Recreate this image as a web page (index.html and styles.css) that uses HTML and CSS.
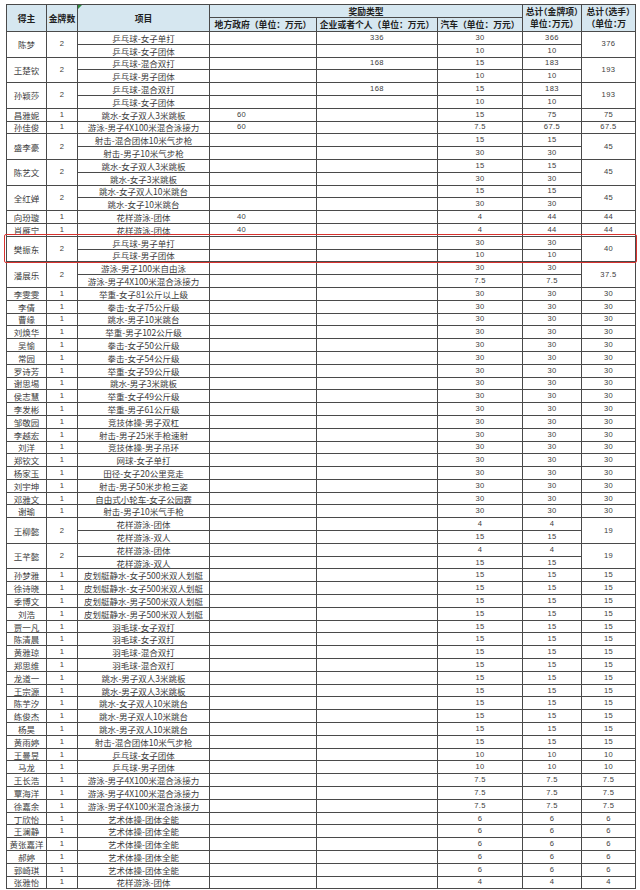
FILE: index.html
```html
<!DOCTYPE html>
<html lang="zh-CN">
<head>
<meta charset="utf-8">
<title>奖励统计</title>
<link rel="stylesheet" href="styles.css">
</head>
<body>
<div class="sheet">
<table class="grid">
<colgroup>
<col class="w-name"><col class="w-cnt"><col class="w-proj"><col class="w-gov"><col class="w-ent"><col class="w-car"><col class="w-tot"><col class="w-sum">
</colgroup>
<thead>
<tr class="h1">
<th rowspan="2">得主</th>
<th rowspan="2">金牌数</th>
<th rowspan="2" class="proj-h">项目</th>
<th colspan="3">奖励类型</th>
<th rowspan="2" class="two"><span class="ln">总计（金牌项）</span><span class="ln">单位：万元）</span></th>
<th rowspan="2" class="two"><span class="ln">总计（选手）</span><span class="ln">（单位：万</span></th>
</tr>
<tr class="h2">
<th>地方政府（单位：万元）</th>
<th>企业或者个人（单位：万元）</th>
<th>汽车（单位：万元）</th>
</tr>
</thead>
<tbody>
<tr><td class="nm" rowspan="2">陈梦</td><td class="ct" rowspan="2">2</td><td class="pj">乒乓球-女子单打</td><td class="gv"></td><td class="num">336</td><td class="num">30</td><td class="num">366</td><td class="num" rowspan="2">376</td></tr>
<tr><td class="pj">乒乓球-女子团体</td><td class="gv"></td><td class="num"></td><td class="num">10</td><td class="num">10</td></tr>
<tr><td class="nm" rowspan="2">王楚钦</td><td class="ct" rowspan="2">2</td><td class="pj">乒乓球-混合双打</td><td class="gv"></td><td class="num">168</td><td class="num">15</td><td class="num">183</td><td class="num" rowspan="2">193</td></tr>
<tr><td class="pj">乒乓球-男子团体</td><td class="gv"></td><td class="num"></td><td class="num">10</td><td class="num">10</td></tr>
<tr><td class="nm" rowspan="2">孙颖莎</td><td class="ct" rowspan="2">2</td><td class="pj">乒乓球-混合双打</td><td class="gv"></td><td class="num">168</td><td class="num">15</td><td class="num">183</td><td class="num" rowspan="2">193</td></tr>
<tr><td class="pj">乒乓球-女子团体</td><td class="gv"></td><td class="num"></td><td class="num">10</td><td class="num">10</td></tr>
<tr><td class="nm">昌雅妮</td><td class="ct">1</td><td class="pj">跳水-女子双人3米跳板</td><td class="gv">60</td><td class="num"></td><td class="num">15</td><td class="num">75</td><td class="num">75</td></tr>
<tr><td class="nm">孙佳俊</td><td class="ct">1</td><td class="pj">游泳-男子4X100米混合泳接力</td><td class="gv">60</td><td class="num"></td><td class="num">7.5</td><td class="num">67.5</td><td class="num">67.5</td></tr>
<tr><td class="nm" rowspan="2">盛李豪</td><td class="ct" rowspan="2">2</td><td class="pj">射击-混合团体10米气步枪</td><td class="gv"></td><td class="num"></td><td class="num">15</td><td class="num">15</td><td class="num" rowspan="2">45</td></tr>
<tr><td class="pj">射击-男子10米气步枪</td><td class="gv"></td><td class="num"></td><td class="num">30</td><td class="num">30</td></tr>
<tr><td class="nm" rowspan="2">陈艺文</td><td class="ct" rowspan="2">2</td><td class="pj">跳水-女子双人3米跳板</td><td class="gv"></td><td class="num"></td><td class="num">15</td><td class="num">15</td><td class="num" rowspan="2">45</td></tr>
<tr><td class="pj">跳水-女子3米跳板</td><td class="gv"></td><td class="num"></td><td class="num">30</td><td class="num">30</td></tr>
<tr><td class="nm" rowspan="2">全红婵</td><td class="ct" rowspan="2">2</td><td class="pj">跳水-女子双人10米跳台</td><td class="gv"></td><td class="num"></td><td class="num">15</td><td class="num">15</td><td class="num" rowspan="2">45</td></tr>
<tr><td class="pj">跳水-女子10米跳台</td><td class="gv"></td><td class="num"></td><td class="num">30</td><td class="num">30</td></tr>
<tr><td class="nm">向玢璇</td><td class="ct">1</td><td class="pj">花样游泳-团体</td><td class="gv">40</td><td class="num"></td><td class="num">4</td><td class="num">44</td><td class="num">44</td></tr>
<tr><td class="nm">肖雁宁</td><td class="ct">1</td><td class="pj">花样游泳-团体</td><td class="gv">40</td><td class="num"></td><td class="num">4</td><td class="num">44</td><td class="num">44</td></tr>
<tr><td class="nm hl" rowspan="2">樊振东<span class="mark"></span></td><td class="ct" rowspan="2">2</td><td class="pj">乒乓球-男子单打</td><td class="gv"></td><td class="num"></td><td class="num">30</td><td class="num">30</td><td class="num" rowspan="2">40</td></tr>
<tr><td class="pj">乒乓球-男子团体</td><td class="gv"></td><td class="num"></td><td class="num">10</td><td class="num">10</td></tr>
<tr><td class="nm" rowspan="2">潘展乐</td><td class="ct" rowspan="2">2</td><td class="pj">游泳-男子100米自由泳</td><td class="gv"></td><td class="num"></td><td class="num">30</td><td class="num">30</td><td class="num" rowspan="2">37.5</td></tr>
<tr><td class="pj">游泳-男子4X100米混合泳接力</td><td class="gv"></td><td class="num"></td><td class="num">7.5</td><td class="num">7.5</td></tr>
<tr><td class="nm">李雯雯</td><td class="ct">1</td><td class="pj">举重-女子81公斤以上级</td><td class="gv"></td><td class="num"></td><td class="num">30</td><td class="num">30</td><td class="num">30</td></tr>
<tr><td class="nm">李倩</td><td class="ct">1</td><td class="pj">拳击-女子75公斤级</td><td class="gv"></td><td class="num"></td><td class="num">30</td><td class="num">30</td><td class="num">30</td></tr>
<tr><td class="nm">曹缘</td><td class="ct">1</td><td class="pj">跳水-男子10米跳台</td><td class="gv"></td><td class="num"></td><td class="num">30</td><td class="num">30</td><td class="num">30</td></tr>
<tr><td class="nm">刘焕华</td><td class="ct">1</td><td class="pj">举重-男子102公斤级</td><td class="gv"></td><td class="num"></td><td class="num">30</td><td class="num">30</td><td class="num">30</td></tr>
<tr><td class="nm">吴愉</td><td class="ct">1</td><td class="pj">拳击-女子50公斤级</td><td class="gv"></td><td class="num"></td><td class="num">30</td><td class="num">30</td><td class="num">30</td></tr>
<tr><td class="nm">常园</td><td class="ct">1</td><td class="pj">拳击-女子54公斤级</td><td class="gv"></td><td class="num"></td><td class="num">30</td><td class="num">30</td><td class="num">30</td></tr>
<tr><td class="nm">罗诗芳</td><td class="ct">1</td><td class="pj">举重-女子59公斤级</td><td class="gv"></td><td class="num"></td><td class="num">30</td><td class="num">30</td><td class="num">30</td></tr>
<tr><td class="nm">谢思埸</td><td class="ct">1</td><td class="pj">跳水-男子3米跳板</td><td class="gv"></td><td class="num"></td><td class="num">30</td><td class="num">30</td><td class="num">30</td></tr>
<tr><td class="nm">侯志慧</td><td class="ct">1</td><td class="pj">举重-女子49公斤级</td><td class="gv"></td><td class="num"></td><td class="num">30</td><td class="num">30</td><td class="num">30</td></tr>
<tr><td class="nm">李发彬</td><td class="ct">1</td><td class="pj">举重-男子61公斤级</td><td class="gv"></td><td class="num"></td><td class="num">30</td><td class="num">30</td><td class="num">30</td></tr>
<tr><td class="nm">邹敬园</td><td class="ct">1</td><td class="pj">竞技体操-男子双杠</td><td class="gv"></td><td class="num"></td><td class="num">30</td><td class="num">30</td><td class="num">30</td></tr>
<tr><td class="nm">李越宏</td><td class="ct">1</td><td class="pj">射击-男子25米手枪速射</td><td class="gv"></td><td class="num"></td><td class="num">30</td><td class="num">30</td><td class="num">30</td></tr>
<tr><td class="nm">刘洋</td><td class="ct">1</td><td class="pj">竞技体操-男子吊环</td><td class="gv"></td><td class="num"></td><td class="num">30</td><td class="num">30</td><td class="num">30</td></tr>
<tr><td class="nm">郑钦文</td><td class="ct">1</td><td class="pj">网球-女子单打</td><td class="gv"></td><td class="num"></td><td class="num">30</td><td class="num">30</td><td class="num">30</td></tr>
<tr><td class="nm">杨家玉</td><td class="ct">1</td><td class="pj">田径-女子20公里竞走</td><td class="gv"></td><td class="num"></td><td class="num">30</td><td class="num">30</td><td class="num">30</td></tr>
<tr><td class="nm">刘宇坤</td><td class="ct">1</td><td class="pj">射击-男子50米步枪三姿</td><td class="gv"></td><td class="num"></td><td class="num">30</td><td class="num">30</td><td class="num">30</td></tr>
<tr><td class="nm">邓雅文</td><td class="ct">1</td><td class="pj">自由式小轮车-女子公园赛</td><td class="gv"></td><td class="num"></td><td class="num">30</td><td class="num">30</td><td class="num">30</td></tr>
<tr><td class="nm">谢瑜</td><td class="ct">1</td><td class="pj">射击-男子10米气手枪</td><td class="gv"></td><td class="num"></td><td class="num">30</td><td class="num">30</td><td class="num">30</td></tr>
<tr><td class="nm" rowspan="2">王柳懿</td><td class="ct" rowspan="2">2</td><td class="pj">花样游泳-团体</td><td class="gv"></td><td class="num"></td><td class="num">4</td><td class="num">4</td><td class="num" rowspan="2">19</td></tr>
<tr><td class="pj">花样游泳-双人</td><td class="gv"></td><td class="num"></td><td class="num">15</td><td class="num">15</td></tr>
<tr><td class="nm" rowspan="2">王芊懿</td><td class="ct" rowspan="2">2</td><td class="pj">花样游泳-团体</td><td class="gv"></td><td class="num"></td><td class="num">4</td><td class="num">4</td><td class="num" rowspan="2">19</td></tr>
<tr><td class="pj">花样游泳-双人</td><td class="gv"></td><td class="num"></td><td class="num">15</td><td class="num">15</td></tr>
<tr><td class="nm">孙梦雅</td><td class="ct">1</td><td class="pj">皮划艇静水-女子500米双人划艇</td><td class="gv"></td><td class="num"></td><td class="num">15</td><td class="num">15</td><td class="num">15</td></tr>
<tr><td class="nm">徐诗晓</td><td class="ct">1</td><td class="pj">皮划艇静水-女子500米双人划艇</td><td class="gv"></td><td class="num"></td><td class="num">15</td><td class="num">15</td><td class="num">15</td></tr>
<tr><td class="nm">季博文</td><td class="ct">1</td><td class="pj">皮划艇静水-男子500米双人划艇</td><td class="gv"></td><td class="num"></td><td class="num">15</td><td class="num">15</td><td class="num">15</td></tr>
<tr><td class="nm">刘浩</td><td class="ct">1</td><td class="pj">皮划艇静水-男子500米双人划艇</td><td class="gv"></td><td class="num"></td><td class="num">15</td><td class="num">15</td><td class="num">15</td></tr>
<tr><td class="nm">贾一凡</td><td class="ct">1</td><td class="pj">羽毛球-女子双打</td><td class="gv"></td><td class="num"></td><td class="num">15</td><td class="num">15</td><td class="num">15</td></tr>
<tr><td class="nm">陈清晨</td><td class="ct">1</td><td class="pj">羽毛球-女子双打</td><td class="gv"></td><td class="num"></td><td class="num">15</td><td class="num">15</td><td class="num">15</td></tr>
<tr><td class="nm">黄雅琼</td><td class="ct">1</td><td class="pj">羽毛球-混合双打</td><td class="gv"></td><td class="num"></td><td class="num">15</td><td class="num">15</td><td class="num">15</td></tr>
<tr><td class="nm">郑思维</td><td class="ct">1</td><td class="pj">羽毛球-混合双打</td><td class="gv"></td><td class="num"></td><td class="num">15</td><td class="num">15</td><td class="num">15</td></tr>
<tr><td class="nm">龙道一</td><td class="ct">1</td><td class="pj">跳水-男子双人3米跳板</td><td class="gv"></td><td class="num"></td><td class="num">15</td><td class="num">15</td><td class="num">15</td></tr>
<tr><td class="nm">王宗源</td><td class="ct">1</td><td class="pj">跳水-男子双人3米跳板</td><td class="gv"></td><td class="num"></td><td class="num">15</td><td class="num">15</td><td class="num">15</td></tr>
<tr><td class="nm">陈芋汐</td><td class="ct">1</td><td class="pj">跳水-女子双人10米跳台</td><td class="gv"></td><td class="num"></td><td class="num">15</td><td class="num">15</td><td class="num">15</td></tr>
<tr><td class="nm">练俊杰</td><td class="ct">1</td><td class="pj">跳水-男子双人10米跳台</td><td class="gv"></td><td class="num"></td><td class="num">15</td><td class="num">15</td><td class="num">15</td></tr>
<tr><td class="nm">杨昊</td><td class="ct">1</td><td class="pj">跳水-男子双人10米跳台</td><td class="gv"></td><td class="num"></td><td class="num">15</td><td class="num">15</td><td class="num">15</td></tr>
<tr><td class="nm">黄雨婷</td><td class="ct">1</td><td class="pj">射击-混合团体10米气步枪</td><td class="gv"></td><td class="num"></td><td class="num">15</td><td class="num">15</td><td class="num">15</td></tr>
<tr><td class="nm">王曼昱</td><td class="ct">1</td><td class="pj">乒乓球-女子团体</td><td class="gv"></td><td class="num"></td><td class="num">10</td><td class="num">10</td><td class="num">10</td></tr>
<tr><td class="nm">马龙</td><td class="ct">1</td><td class="pj">乒乓球-男子团体</td><td class="gv"></td><td class="num"></td><td class="num">10</td><td class="num">10</td><td class="num">10</td></tr>
<tr><td class="nm">王长浩</td><td class="ct">1</td><td class="pj">游泳-男子4X100米混合泳接力</td><td class="gv"></td><td class="num"></td><td class="num">7.5</td><td class="num">7.5</td><td class="num">7.5</td></tr>
<tr><td class="nm">覃海洋</td><td class="ct">1</td><td class="pj">游泳-男子4X100米混合泳接力</td><td class="gv"></td><td class="num"></td><td class="num">7.5</td><td class="num">7.5</td><td class="num">7.5</td></tr>
<tr><td class="nm">徐嘉余</td><td class="ct">1</td><td class="pj">游泳-男子4X100米混合泳接力</td><td class="gv"></td><td class="num"></td><td class="num">7.5</td><td class="num">7.5</td><td class="num">7.5</td></tr>
<tr><td class="nm">丁欣怡</td><td class="ct">1</td><td class="pj">艺术体操-团体全能</td><td class="gv"></td><td class="num"></td><td class="num">6</td><td class="num">6</td><td class="num">6</td></tr>
<tr><td class="nm">王澜静</td><td class="ct">1</td><td class="pj">艺术体操-团体全能</td><td class="gv"></td><td class="num"></td><td class="num">6</td><td class="num">6</td><td class="num">6</td></tr>
<tr><td class="nm">黄张嘉洋</td><td class="ct">1</td><td class="pj">艺术体操-团体全能</td><td class="gv"></td><td class="num"></td><td class="num">6</td><td class="num">6</td><td class="num">6</td></tr>
<tr><td class="nm">郝婷</td><td class="ct">1</td><td class="pj">艺术体操-团体全能</td><td class="gv"></td><td class="num"></td><td class="num">6</td><td class="num">6</td><td class="num">6</td></tr>
<tr><td class="nm">郭崎琪</td><td class="ct">1</td><td class="pj">艺术体操-团体全能</td><td class="gv"></td><td class="num"></td><td class="num">6</td><td class="num">6</td><td class="num">6</td></tr>
<tr><td class="nm">张雅怡</td><td class="ct">1</td><td class="pj">花样游泳-团体</td><td class="gv"></td><td class="num"></td><td class="num">4</td><td class="num">4</td><td class="num">4</td></tr>
</tbody>
</table>
</div>
</body>
</html>
```
FILE: styles.css
```css
html, body {
  margin: 0;
  padding: 0;
  background: #ffffff;
}

body {
  font-family: "Noto Sans CJK SC", "Noto Sans", sans-serif;
  color: #3c3c3c;
}

.sheet {
  padding: 4px 0 0 6px;
}

.grid {
  border-collapse: collapse;
  table-layout: fixed;
  width: 629px;
}

.w-name { width: 40px; }
.w-cnt { width: 31px; }
.w-proj { width: 132px; }
.w-gov { width: 107px; }
.w-ent { width: 121px; }
.w-car { width: 85px; }
.w-tot { width: 59px; }
.w-sum { width: 54px; }

.grid th,
.grid td {
  border: 1px solid #4a4a4a;
  padding: 0;
  text-align: center;
  vertical-align: middle;
  white-space: nowrap;
  overflow: hidden;
}

.grid thead th {
  background: #d6e7f0;
  color: #1f1f1f;
  font-weight: bold;
  font-size: 8.8px;
  line-height: 11px;
}

.h1 { height: 13px; }
.h2 { height: 14px; }

.grid tbody tr {
  height: 12.8px;
}

.grid td {
  font-size: 8.5px;
  line-height: 10px;
}

.grid th.proj-h {
  position: relative;
  overflow: visible;
}

.proj-h::before {
  content: "";
  position: absolute;
  left: 0;
  top: 0;
  border-top: 4px solid #2f8a3e;
  border-right: 4px solid transparent;
}

.grid thead th.two {
  font-feature-settings: "halt";
  line-height: 12px;
}

.two .ln {
  display: block;
  height: 12px;
  white-space: nowrap;
  overflow: hidden;
}

.grid td.num,
.grid td.ct,
.grid td.gv {
  font-family: "Liberation Sans", Arial, sans-serif;
  font-size: 7.6px;
  letter-spacing: 0.4px;
}

.grid td.gv {
  text-align: left;
  padding-left: 27px;
}

.grid td.hl {
  position: relative;
  overflow: visible;
}

.mark {
  position: absolute;
  left: -3px;
  top: -3px;
  bottom: -2px;
  width: 633px;
  box-sizing: border-box;
  border: 1.5px solid #d8332f;
  border-radius: 2px;
  pointer-events: none;
}
```
